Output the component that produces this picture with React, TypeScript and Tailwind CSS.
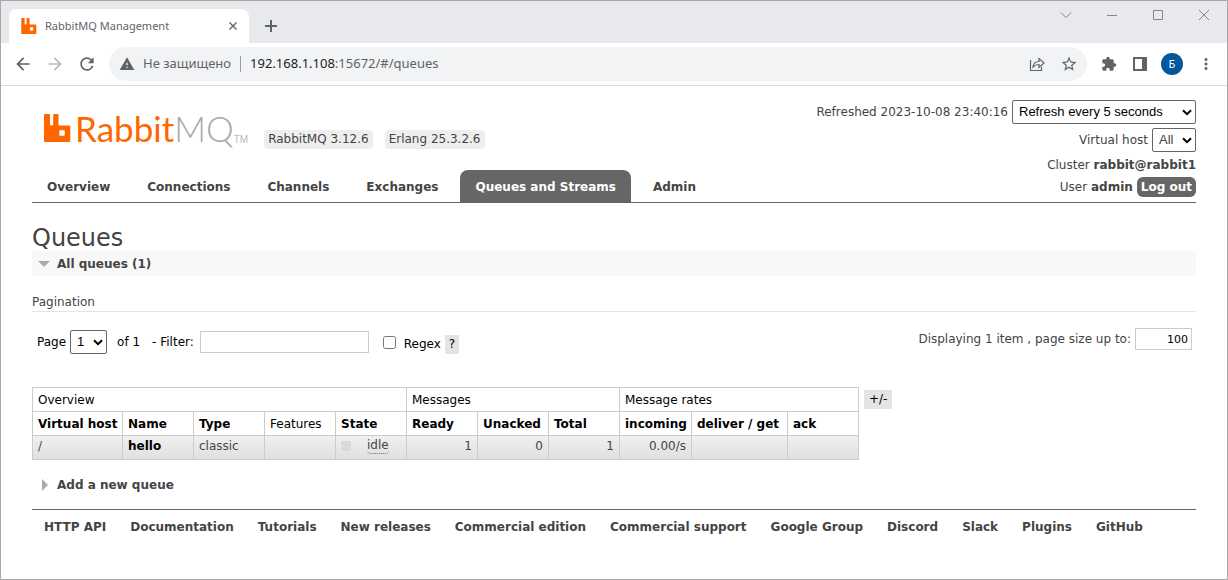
import type { ReactNode } from "react";
import { MdArrowBack, MdArrowForward, MdRefresh, MdWarning, MdStarBorder, MdExtension, MdMoreVert } from "react-icons/md";

function RabbitMark({ className }: { className: string }) {
  return (
    <svg viewBox="0 0 27 28" className={className} aria-hidden="true">
      <path
        fill="#f60"
        fillRule="evenodd"
        d="M1 0h4a1 1 0 0 1 1 1v9.500a1 1 0 0 0 1 1h1.200a1 1 0 0 0 1-1V1a1 1 0 0 1 1-1H13.500a1 1 0 0 1 1 1v9.500a1 1 0 0 0 1 1h9.800a1 1 0 0 1 1 1V27a1 1 0 0 1-1 1H1a1 1 0 0 1-1-1V1a1 1 0 0 1 1-1zM16.300 16.300a1 1 0 0 0-1 1v3.500a1 1 0 0 0 1 1h3.500a1 1 0 0 0 1-1v-3.500a1 1 0 0 0-1-1z"
      />
    </svg>
  );
}

function Select({ label, id, options, className }: { label: string; id: string; options: string[]; className: string }) {
  return (
    <span className="relative inline-flex items-center">
      <select
        id={id}
        aria-label={label}
        className={`h-6 appearance-none rounded-xs border border-[#666] bg-white pr-5 pl-1.5 font-['Liberation_Sans',Arial,sans-serif] text-[13px] ${className}`}
      >
        {options.map((o) => (
          <option key={o}>{o}</option>
        ))}
      </select>
      <svg viewBox="0 0 10 7" className="pointer-events-none absolute right-1 h-[7px] w-2.5" aria-hidden="true">
        <path d="M1 1.200l4 4 4-4" fill="none" stroke="#000" strokeWidth="2" />
      </svg>
    </span>
  );
}

function BrowserChrome() {
  return (
    <div className="font-['Noto_Sans',sans-serif] text-[#5f6368]">
      <div className="flex h-[42px] items-end bg-[#e8e9ed] pl-2">
        <div className="flex h-[34px] w-60 items-center rounded-t-lg bg-white pr-3 pl-3 text-[11px]">
          <RabbitMark className="mr-2 h-4 w-4" />
          <span className="flex-1">RabbitMQ Management</span>
          <button aria-label="Close tab">
            <svg viewBox="0 0 8 8" className="size-2" fill="none" stroke="currentColor" strokeWidth="1.4"><path d="M.5.5l7 7M7.500.5l-7 7" /></svg>
          </button>
        </div>
        <button aria-label="New tab" className="ml-4 flex h-[34px] items-center">
          <svg viewBox="0 0 12 12" className="h-3 w-3" fill="none" stroke="currentColor" strokeWidth="2"><path d="M6 0v12M0 6h12" /></svg>
        </button>
        <div className="ml-auto flex items-start gap-[34px] self-start pt-2 pr-[17px] text-[#85868a]">
          <button aria-label="Search tabs">
            <svg viewBox="0 0 12 12" className="size-3" fill="none" stroke="currentColor"><path d="M1 3.500l5 5 5-5" /></svg>
          </button>
          <button aria-label="Minimize">
            <svg viewBox="0 0 12 12" className="size-3" fill="none" stroke="currentColor"><path d="M1 6.500h10" /></svg>
          </button>
          <button aria-label="Maximize">
            <svg viewBox="0 0 12 12" className="size-3" fill="none" stroke="currentColor"><path d="M1.500 1.500h9v9h-9z" /></svg>
          </button>
          <button aria-label="Close window">
            <svg viewBox="0 0 12 12" className="size-3" fill="none" stroke="currentColor"><path d="M1 1l10 10M11 1L1 11" /></svg>
          </button>
        </div>
      </div>
      <div className="flex h-[43px] items-center border-b border-[#d9dadc] pr-3 pl-3">
        <button aria-label="Back" className="text-xl"><MdArrowBack /></button>
        <button aria-label="Forward" className="ml-3 text-xl text-[#b8babd]"><MdArrowForward /></button>
        <button aria-label="Reload" className="ml-3 text-xl"><MdRefresh /></button>
        <div className="ml-3 flex h-[34px] flex-1 items-center rounded-full bg-[#f1f3f4] pr-[9px] pl-2.5 text-[13px]">
          <MdWarning className="size-4" />
          <span className="ml-2">Не защищено</span>
          <span className="mx-[9px] h-4 w-px bg-[#9aa0a6]" />
          <span className="flex-1 whitespace-nowrap">
            <span className="text-[#202124]">192.168.1.108</span>:15672/#/queues
          </span>
          <button aria-label="Share">
            <svg viewBox="0 0 16 16" className="size-4" fill="none" stroke="currentColor" strokeWidth="1.2"><path d="M1.500 4v10.500h11V11" /><path d="M4 11c.3-3.500 2.300-5.500 6-5.500V2.500l5 4.500-5 4.500V8.500C7.500 8.500 5.500 9.200 4 11z" /></svg>
          </button>
          <button aria-label="Bookmark" className="ml-[15px] text-lg"><MdStarBorder /></button>
        </div>
        <button aria-label="Extensions" className="ml-3.5 text-base"><MdExtension /></button>
        <button aria-label="Side panel" className="ml-4">
          <svg viewBox="0 0 14 14" className="size-3.5"><path d="M1 1h12v12H1z" fill="none" stroke="currentColor" strokeWidth="2" /><path d="M9 1h4v12H9z" fill="currentColor" /></svg>
        </button>
        <button aria-label="Profile" className="ml-3.5 flex size-[22px] items-center justify-center rounded-full bg-[#01579b] text-[11px] text-white">Б</button>
        <button aria-label="Menu" className="ml-3.5 text-lg"><MdMoreVert /></button>
      </div>
    </div>
  );
}

const tabs = ["Overview", "Connections", "Channels", "Exchanges", "Queues and Streams", "Admin"];
const footerLinks = ["HTTP API", "Documentation", "Tutorials", "New releases", "Commercial edition", "Commercial support", "Google Group", "Discord", "Slack", "Plugins", "GitHub"];

function Header() {
  return (
    <header className="flex justify-between border-b border-[#666] pt-3.5">
      <div className="flex flex-col justify-between">
        <div className="flex items-end pt-2 pl-3">
          <a href="#/" className="flex items-end pb-px" aria-label="RabbitMQ">
            <RabbitMark className="mb-1.5 h-7 w-[27px]" />
            <span className="ml-1 font-[Lato,sans-serif] text-[35px] leading-10 text-[#f60]">
              Rabbit<span className="font-light text-[#a8a8a8]">MQ</span>
            </span>
            <span className="mb-0.5 font-['Liberation_Sans',sans-serif] text-[10px] text-[#b8b8b8]">TM</span>
          </a>
          <span className="ml-4 rounded-sm bg-[#eee] px-1 leading-[19px]">RabbitMQ 3.12.6</span>
          <span className="ml-3 rounded-sm bg-[#eee] px-1 leading-[19px]">Erlang 25.3.2.6</span>
        </div>
        <nav className="flex gap-[7px] font-bold">
          {tabs.map((t) => (
            <a
              key={t}
              href="#/"
              className={t === "Queues and Streams" ? "rounded-t-lg bg-[#666] px-[15px] pt-[9px] pb-[7px] text-white" : "px-[15px] pt-[9px] pb-[7px]"}
            >
              {t}
            </a>
          ))}
        </nav>
      </div>
      <div className="flex flex-col items-end pb-[5px]">
        <div className="flex items-center gap-1">
          <label htmlFor="refresh">Refreshed 2023-10-08 23:40:16</label>
          <Select id="refresh" label="Refresh interval" options={["Refresh every 5 seconds"]} className="w-46 text-black" />
        </div>
        <div className="mt-1 flex items-center gap-1">
          <label htmlFor="vhost">Virtual host</label>
          <Select id="vhost" label="Virtual host" options={["All"]} className="w-11" />
        </div>
        <div className="mt-[5px]">Cluster <b>rabbit@rabbit1</b></div>
        <div className="mt-1 flex items-center gap-1">
          <span>User <b>admin</b></span>
          <button className="rounded-md bg-[#666] px-1 py-0.5 font-bold text-white">Log out</button>
        </div>
      </div>
    </header>
  );
}

function Th({ children, bold = true }: { children: ReactNode; bold?: boolean }) {
  return <th className={`border border-[#ccc] px-[5px] text-left ${bold ? "font-bold" : "font-normal"}`}>{children}</th>;
}

function Td({ children, className = "" }: { children?: ReactNode; className?: string }) {
  return <td className={`border border-[#ccc] px-[5px] pb-1 ${className}`}>{children}</td>;
}

function QueueTable() {
  return (
    <table className="w-[827px] table-fixed border-collapse leading-4 whitespace-nowrap">
      <colgroup>
        <col className="w-[90px]" />
        <col /><col /><col /><col /><col /><col /><col />
        <col className="w-[72px]" />
        <col className="w-24" />
        <col />
      </colgroup>
      <thead className="text-black">
        <tr className="h-6 text-left">
          <th colSpan={5} className="border border-[#ccc] px-[5px] font-normal">Overview</th>
          <th colSpan={3} className="border border-[#ccc] px-[5px] font-normal">Messages</th>
          <th colSpan={3} className="border border-[#ccc] px-[5px] font-normal">Message rates</th>
        </tr>
        <tr className="h-6">
          <Th>Virtual host</Th><Th>Name</Th><Th>Type</Th><Th bold={false}>Features</Th><Th>State</Th>
          <Th>Ready</Th><Th>Unacked</Th><Th>Total</Th>
          <Th>incoming</Th><Th>deliver / get</Th><Th>ack</Th>
        </tr>
      </thead>
      <tbody>
        <tr className="h-6 bg-linear-to-b from-[#f0f0f0] to-[#dfdfdf]">
          <Td>/</Td>
          <Td><a href="#/" className="font-bold text-black">hello</a></Td>
          <Td>classic</Td>
          <Td />
          <Td>
            <span className="flex items-center">
              <span className="size-2.5 bg-[#dadada]" />
              <abbr className="ml-4 rounded-sm border-b border-dotted border-[#666] no-underline">idle</abbr>
            </span>
          </Td>
          <Td className="text-right">1</Td>
          <Td className="text-right">0</Td>
          <Td className="text-right">1</Td>
          <Td className="text-right">0.00/s</Td>
          <Td />
          <Td />
        </tr>
      </tbody>
    </table>
  );
}

export default function App() {
  return (
    <div className="flex min-h-screen flex-col border border-[#a8a8a8] bg-white">
      <BrowserChrome />
      <div className="px-[31px] font-['DejaVu_Sans',Verdana,sans-serif] text-xs text-[#444]">
        <Header />
        <main>
          <h1 className="mt-[22px] text-2xl leading-[26px]">Queues</h1>
          <h2 className="flex h-[25px] items-center bg-[#f8f8f8] pl-1.5 font-bold">
            <svg viewBox="0 0 12 6" className="mr-[7px] h-1.5 w-3"><path d="M0 0h12L6 6z" fill="#aaa" /></svg>
            All queues (1)
          </h2>
          <h3 className="mt-[18px] border-b border-[#e4e4e4] pb-px">Pagination</h3>
          <div className="flex items-start justify-between pt-4 pr-1 pl-[5px] text-black">
            <div className="flex items-center pt-0.5">
              <label htmlFor="page" className="mr-1">Page</label>
              <Select id="page" label="Page" options={["1"]} className="w-[37px]" />
              <span className="ml-2.5">of 1</span>
              <label htmlFor="filter" className="ml-3">- Filter:</label>
              <input id="filter" type="text" className="ml-1.5 h-[22px] w-[169px] border border-[#ccc] px-1" />
              <input id="regex" type="checkbox" className="ml-3.5 size-[13px]" />
              <div className="flex items-center pt-1 pl-2">
                <label htmlFor="regex">Regex</label>
                <button className="ml-1 bg-[#e4e4e4] px-1 leading-[19px]">?</button>
              </div>
            </div>
            <div className="flex items-center text-[#444]">
              <label htmlFor="size">Displaying 1 item , page size up to:</label>
              <input id="size" type="text" defaultValue="100" className="ml-1 h-[22px] w-[57px] border border-[#ccc] px-[3px] text-right text-[11px] text-black" />
            </div>
          </div>
          <div className="mt-[33px] flex items-start gap-[5px]">
            <QueueTable />
            <button className="mt-[3px] bg-[#e4e4e4] px-[5px] leading-[19px] text-black">+/-</button>
          </div>
          <h2 className="mt-3 flex h-[25px] items-center pl-2.5 font-bold">
            <svg viewBox="0 0 6 12" className="mr-[9px] h-3 w-1.5"><path d="M0 0v12l6-6z" fill="#aaa" /></svg>
            Add a new queue
          </h2>
        </main>
        <footer className="mt-3 flex flex-wrap gap-x-6 border-t border-[#666] pt-[9px] pl-3 font-bold">
          {footerLinks.map((l) => (
            <a key={l} href="#/">{l}</a>
          ))}
        </footer>
      </div>
    </div>
  );
}
